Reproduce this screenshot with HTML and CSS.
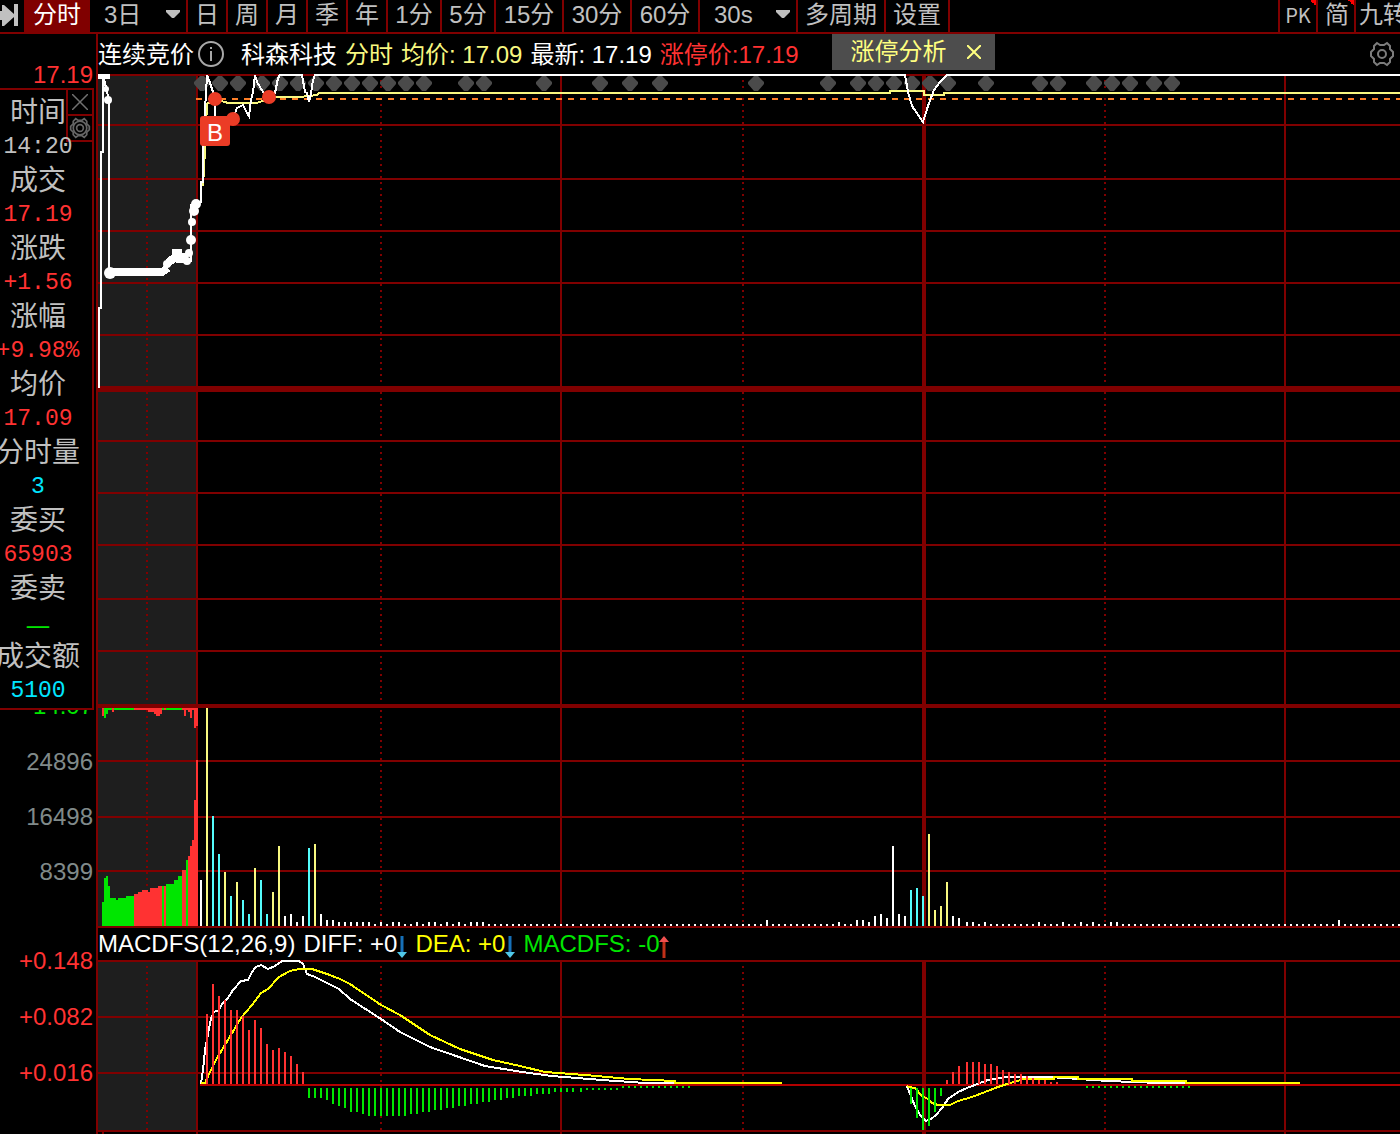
FILE: index.html
```html
<!DOCTYPE html>
<html lang="zh-CN">
<head>
<meta charset="utf-8">
<title>科森科技 分时</title>
<link rel="stylesheet" href="styles.css">
</head>
<body>
<header class="toolbar">
  <button class="tool tool-jump" type="button" aria-label="跳转">
    <svg width="18" height="28" viewBox="0 0 18 28"><path d="M0 9h2V3h2l10 9v3L4 24H2v-6H0zM14 2h4v22h-4z" fill="#c0c0c0"/></svg>
  </button>
  <button class="tool tool-active" type="button">分时</button>
  <label class="picker">
    <select aria-label="天数"><option>3日</option><option>5日</option></select>
    <svg class="caret" width="14" height="8" viewBox="0 0 14 8"><path d="M0 0h14v2L8 8H6L0 2z" fill="#c0c0c0"/></svg>
  </label>
  <button class="tool tool-s" type="button">日</button>
  <button class="tool tool-s" type="button">周</button>
  <button class="tool tool-s" type="button">月</button>
  <button class="tool tool-s" type="button">季</button>
  <button class="tool tool-s" type="button">年</button>
  <button class="tool tool-m" type="button">1分</button>
  <button class="tool tool-m" type="button">5分</button>
  <button class="tool tool-l" type="button">15分</button>
  <button class="tool tool-l" type="button">30分</button>
  <button class="tool tool-l" type="button">60分</button>
  <label class="picker">
    <select aria-label="秒周期"><option>30s</option><option>15s</option></select>
    <svg class="caret" width="14" height="8" viewBox="0 0 14 8"><path d="M0 0h14v2L8 8H6L0 2z" fill="#c0c0c0"/></svg>
  </label>
  <button class="tool" type="button">多周期</button>
  <button class="tool" type="button">设置</button>
  <div class="toolbar-end">
    <button class="tool tool-flag tool-pk" type="button">PK</button>
    <button class="tool tool-flag" type="button">简</button>
    <button class="tool tool-cut" type="button">九转</button>
  </div>
</header>

<main class="workspace">
  <div class="axis axis-price"><span class="up">17.19</span><span class="down">14.07</span></div>
  <div class="infobar">
    <span class="state">连续竞价
      <svg width="28" height="28" viewBox="0 0 28 28" fill="none" stroke="#a8a8a8" stroke-width="2"><circle cx="14" cy="13" r="12"/><path d="M14 10v10M14 6v2"/></svg>
    </span>
    <span>科森科技</span>
    <span class="avg">分时</span>
    <span class="avg">均价: 17.09</span>
    <span>最新: 17.19</span>
    <span class="up">涨停价:17.19</span>
    <div class="tag">
      <a href="#limit">涨停分析</a>
      <button class="icon-button" type="button" aria-label="关闭涨停分析">
        <svg width="14" height="14" viewBox="0 0 14 14" stroke="#ffff80" stroke-width="2"><path d="M0 0l14 14M14 0L0 14"/></svg>
      </button>
    </div>
    <button class="icon-button settings" type="button" aria-label="图表设置">
      <svg width="24" height="26" viewBox="0 0 24 26" fill="none" stroke="#7c7c7c" stroke-width="2"><path d="M7 2l3 2h4l3-2 3 3v3l3 3v4l-3 3v3l-3 3-3-2h-4l-3 2-3-3v-3l-3-3v-4l3-3V5z"/><circle cx="12" cy="13" r="4"/></svg>
    </button>
  </div>

  <div class="plot plot-price">
    <svg viewBox="98 74 1302 634" preserveAspectRatio="none">
      <path class="shade" d="M98 76H196V708H98z"/>
      <path class="grid" d="M98 75H1400M98 125H1400M98 179H1400M98 231H1400M98 283H1400M98 335H1400M98 441H1400M98 493H1400M98 545H1400M98 599H1400M98 651H1400M197 76V708M561 76V708M1285 76V708"/>
      <path class="grid grid-dots" d="M147 80V708M381 80V708M743 80V708M1105 80V708"/>
      <path class="grid grid-mid" d="M924 76V708M98 706H1400"/>
      <path class="grid grid-zero" d="M98 389H1400"/>
      <path class="diamonds" id="signals"/>
      <path class="prev" d="M196 99H1400"/>
      <path class="line avg-line" d="M203 186L205 150L207 104L215 99L228 103H257L262 101L276 97H300L317 95L319 93H890V91H924V95H944V93H1400"/>
      <path class="line" d="M99 388V308H101V152H103V75L109 100V272M191 262V204M197 202H201V182H203V146L207 75L209 80L213 92L215 99V116M233 118L237 108L243 105L247 113L249 116L251 100L253 92L255 75L257 82L263 92L269 97L275 93L278 78L280 75H302L305 92L307 93L309 102L311 94L313 80L315 75H905L908 92L912 106L923 122L928 106L934 90L940 82L947 75H1400"/>
      <path class="beads" d="M98 75H110M108 272H162L168 268M168 263L175 257H188M172 253H182M176 259H184"/>
      <g class="knots"><circle cx="106" cy="89" r="3"/><circle cx="108" cy="100" r="4"/><circle cx="110" cy="273" r="6"/><circle cx="167" cy="264" r="4"/><circle cx="178" cy="253" r="4"/><circle cx="187" cy="261" r="4"/><circle cx="189" cy="253" r="4"/><circle cx="191" cy="240" r="5"/><circle cx="192" cy="222" r="4"/><circle cx="194" cy="211" r="5"/><circle cx="196" cy="204" r="5"/></g>
      <g class="marks"><circle cx="215" cy="99" r="7"/><circle cx="269" cy="97" r="7"/><circle cx="233" cy="119" r="7"/></g>
    </svg>
    <span class="badge">B</span>
  </div>

  <div class="axis axis-volume"><span>24896</span><span>16498</span><span>8399</span></div>
  <div class="plot plot-volume">
    <svg viewBox="98 708 1302 220" preserveAspectRatio="none">
      <path class="shade" d="M98 708H196V926H98z"/>
      <path class="grid" d="M98 761H1400M98 817H1400M98 871H1400M98 927H1400M197 708V926M561 708V926M1285 708V926"/>
      <path class="grid grid-dots" d="M147 710V926M381 710V926M743 710V926M1105 710V926"/>
      <path class="grid grid-mid" d="M924 708V926"/>
      <g id="auction"></g>
      <g id="volume"></g>
    </svg>
  </div>

  <div class="axis axis-macd"><span>+0.148</span><span>+0.082</span><span>+0.016</span></div>
  <div class="macd">
    <div class="legend">
      <span>MACDFS(12,26,9)</span>
      <span class="reading">DIFF: +0<svg width="10" height="24" viewBox="0 0 10 24"><path d="M5 2v19" stroke="#1670b8" stroke-width="3"/><path d="M0 18h10L5 24z" fill="#50c8e8"/></svg></span>
      <span class="reading dea">DEA: +0<svg width="10" height="24" viewBox="0 0 10 24"><path d="M5 2v19" stroke="#1670b8" stroke-width="3"/><path d="M0 18h10L5 24z" fill="#50c8e8"/></svg></span>
      <span class="reading hist">MACDFS: -0<svg width="10" height="24" viewBox="0 0 10 24"><path d="M5 4v20" stroke="#c03018" stroke-width="3"/><path d="M0 8h10L5 2z" fill="#f05050"/></svg></span>
    </div>
    <div class="plot plot-macd">
      <svg viewBox="98 960 1302 174" preserveAspectRatio="none">
        <path class="shade" d="M98 962H196V1130H98z"/>
        <path class="grid" d="M98 961H1400M98 1017H1400M98 1073H1400M98 1131H1400M103 1132V1134M197 962V1134M561 962V1134M1285 962V1134"/>
        <path class="grid grid-dots" d="M147 966V1130M381 966V1130M743 966V1130M1105 966V1130"/>
        <path class="grid grid-mid" d="M924 962V1134"/>
        <path class="grid grid-base" d="M200 1085H1400"/>
        <path class="line" d="M201 1084L203 1070L205 1050L208 1034L211 1018L214 1012L219 1010L222 1004L228 998L233 990L241 981L248 980L252 972L256 967L261 965L268 969L275 966L282 961H299L303 964L307 974L315 977L327 983L339 989L350 999L381 1019L400 1032L430 1047L456 1056L485 1066L522 1072L552 1076L602 1080L645 1083H782M907 1086L910 1094L915 1106L920 1115L926 1121L931 1119L936 1115L942 1108L948 1099L958 1092L967 1088L980 1083L988 1080L1000 1078L1005 1077H1050L1108 1081L1160 1083H1300"/>
        <path class="line dea-line" d="M201 1083H205L210 1072L217 1058L228 1040L241 1018L252 1005L261 993L268 989L279 977L290 971L299 969H312L327 974L340 979L350 984L381 1005L400 1015L430 1035L460 1049L493 1060L520 1066L545 1072L585 1075L630 1079L675 1081V1083H782M907 1086L909 1087L915 1088L922 1096L928 1099L932 1103L938 1105H950L958 1101L972 1097L985 1092L998 1087L1010 1083L1024 1079H1054V1077H1078V1079H1132V1081H1186V1083H1300"/>
        <path class="bars bars-up" id="macd-up"/>
        <path class="bars bars-down" id="macd-down"/>
      </svg>
    </div>
  </div>

  <aside class="quote">
    <dl>
      <dt>时间</dt><dd class="plain">14:20</dd>
      <dt>成交</dt><dd>17.19</dd>
      <dt>涨跌</dt><dd>+1.56</dd>
      <dt>涨幅</dt><dd>+9.98%</dd>
      <dt>均价</dt><dd>17.09</dd>
      <dt>分时量</dt><dd class="lots">3</dd>
      <dt>委买</dt><dd>65903</dd>
      <dt>委卖</dt><dd class="none">—</dd>
      <dt>成交额</dt><dd class="lots">5100</dd>
    </dl>
    <div class="quote-tools">
      <button class="icon-button" type="button" aria-label="关闭">
        <svg width="16" height="16" viewBox="0 0 16 16" stroke="#707070" stroke-width="1.500"><path d="M0 0l16 16M16 0L0 16"/></svg>
      </button>
      <button class="icon-button" type="button" aria-label="设置">
        <svg width="22" height="22" viewBox="0 0 24 26" fill="none" stroke="#666" stroke-width="2"><path d="M7 2l3 2h4l3-2 3 3v3l3 3v4l-3 3v3l-3 3-3-2h-4l-3 2-3-3v-3l-3-3v-4l3-3V5z"/><circle cx="12" cy="13" r="8"/><circle cx="12" cy="13" r="4"/></svg>
      </button>
    </div>
  </aside>
</main>
<script src="chart.js"></script>
</body>
</html>
```

FILE: styles.css
```css
* { box-sizing: border-box; }

body {
  margin: 0;
  background: #000;
  color: #fff;
  font: 24px/28px "Liberation Sans", "Noto Sans CJK SC", sans-serif;
  overflow-x: hidden;
}

button, select {
  margin: 0;
  padding: 0;
  border: 0;
  background: none;
  color: inherit;
  font: inherit;
}

svg { display: block; flex: none; }

a { color: inherit; text-decoration: none; }

.up { color: #ff3232; }
.down { color: #00e600; }
.avg { color: #f8f880; }

/* Period toolbar */
.toolbar {
  display: flex;
  height: 34px;
  border-bottom: 2px solid #800000;
  color: #c0c0c0;
  white-space: nowrap;
}

.tool {
  flex: none;
  padding: 0 7px 2px;
  border-right: 2px solid #800000;
}

.tool-jump { width: 24px; padding: 0; border: 0; }
.tool-active { width: 66px; border: 0; background: #800000; color: #fff; }
.tool-s { width: 40px; }
.tool-m { width: 54px; }
.tool-l { width: 68px; }

.picker {
  position: relative;
  flex: none;
  width: 98px;
  border-right: 2px solid #800000;
}

.picker select {
  width: 100%;
  height: 100%;
  padding: 0 0 2px 14px;
  appearance: none;
}

.caret {
  position: absolute;
  right: 6px;
  top: 10px;
  pointer-events: none;
}

.toolbar-end {
  display: flex;
  margin-left: auto;
  border-left: 2px solid #800000;
}

.tool-flag {
  width: 38px;
  background: linear-gradient(45deg, transparent 50%, #f00 50%) right top / 6px 6px no-repeat;
}

.tool-pk { padding: 0 4px 2px; font: 20px/28px "Noto Sans CJK SC", sans-serif; }
.tool-cut { width: 44px; padding: 0 0 2px 3px; border: 0; overflow: hidden; text-align: left; }

/* Workspace: value axis on the left, panes on the right */
.workspace {
  position: relative;
  display: grid;
  grid-template-columns: 98px minmax(0, 1fr);
}

.axis {
  display: flex;
  flex-direction: column;
  padding-right: 3px;
  border-right: 2px solid #800000;
  color: #808a8a;
  text-align: right;
}

.axis-price { grid-row: span 2; justify-content: space-between; padding-top: 27px; }
.axis-price .down { margin-bottom: -12px; }
.axis-volume { padding-top: 26px; line-height: 55px; }
.axis-macd { padding-top: 5px; line-height: 56px; color: #ff3232; }

.infobar {
  display: flex;
  gap: 8px;
  height: 40px;
  padding-top: 7px;
  white-space: nowrap;
}

.state { display: flex; gap: 3px; margin-right: 8px; }

.tag {
  display: flex;
  align-items: center;
  gap: 20px;
  height: 36px;
  margin: -7px 0 0 25px;
  padding: 0 14px 0 19px;
  background: #4d4d4d;
  color: #ffff80;
}

.icon-button { display: grid; place-items: center; }
.settings { align-self: flex-start; margin: 0 6px 0 auto; }

.plot { position: relative; }
.plot svg { width: 100%; height: 100%; shape-rendering: crispEdges; }
.plot-price { height: 634px; }
.plot-volume { height: 220px; }
.plot-macd { height: 174px; }

.shade { fill: #1e1e1e; }
.grid { fill: none; stroke: #800000; stroke-width: 2; }
.grid-dots { stroke-dasharray: 2 4; }
.grid-mid { stroke-width: 4; }
.grid-zero { stroke-width: 6; }
.grid-base { stroke: #b40000; }
.prev { fill: none; stroke: #ff7f27; stroke-width: 2; stroke-dasharray: 6 6; }
.line { fill: none; stroke: #fff; stroke-width: 2; }
.avg-line { stroke: #f8f880; }
.dea-line { stroke: #ff0; }
.beads { fill: none; stroke: #fff; stroke-width: 8; stroke-linejoin: round; }
.knots { fill: #fff; shape-rendering: auto; }
.diamonds { fill: #4a4a4a; shape-rendering: auto; }
.marks { fill: #eb3c26; shape-rendering: auto; }

.bars { fill: none; stroke: #fff; stroke-width: 2; }
.bars-up { stroke: #ff3232; }
.bars-down { stroke: #00e600; }
.bars-buy { stroke: #f8f880; }
.bars-sell { stroke: #54fcfc; }

.badge {
  position: absolute;
  left: 102px;
  top: 42px;
  width: 30px;
  height: 30px;
  border-radius: 3px;
  background: #eb3c26;
  line-height: 34px;
  text-align: center;
}

.legend {
  display: flex;
  gap: 8px;
  height: 32px;
  padding-top: 2px;
  white-space: nowrap;
}

.reading { display: flex; height: 28px; }
.dea { color: #ff0; }
.hist { color: #00e600; }
.reading svg { margin-top: 4px; }

/* Floating quote window */
.quote {
  position: absolute;
  left: 0;
  top: 54px;
  width: 94px;
  border: solid #800000;
  border-width: 2px 2px 2px 0;
  background: #000;
  overflow: hidden;
}

.quote dl {
  position: relative;
  z-index: 1;
  margin: 0;
  padding: 6px 16px 0 0;
  pointer-events: none;
}

.quote dt, .quote dd {
  display: flex;
  justify-content: center;
  margin: 0;
  line-height: 34px;
  white-space: nowrap;
}

.quote dt { color: #c0c0c0; font-size: 28px; }
.quote dd { color: #ff3232; font-family: "Liberation Mono", monospace; font-size: 23px; }
.quote .plain { color: #c0c0c0; }
.quote .lots { color: #00e5ff; }
.quote .none { color: #00e600; font: 28px/34px "Noto Sans CJK SC", sans-serif; }

.quote-tools {
  position: absolute;
  right: 0;
  top: 0;
  border-left: 2px solid #800000;
}

.quote-tools button {
  width: 24px;
  height: 26px;
  border-bottom: 2px solid #800000;
}
```

FILE: chart.js
```js
const SVG_NS = "http://www.w3.org/2000/svg";

// Builds a path of vertical strokes from [x, top] pairs down to a base line.
const strokes = (pairs, base) => pairs.map(([x, y]) => `M${x} ${y}V${base}`).join("");

function addPath(parent, className, d) {
  const path = document.createElementNS(SVG_NS, "path");
  path.setAttribute("class", className);
  path.setAttribute("d", d);
  parent.append(path);
}

// Signal markers along the top of the price pane
const signals = [202, 220, 238, 262, 280, 298, 316, 334, 352, 370, 388, 406, 424, 466, 484,
  544, 600, 630, 660, 756, 828, 858, 876, 894, 912, 930, 948, 986, 1040, 1058, 1094, 1112,
  1130, 1154, 1172];
document.getElementById("signals").setAttribute("d",
  signals.map(x => `M${x - 2} 76h4l6 6v2l-6 7h-4l-6-7v-2z`).join(""));

// Opening auction: [left, right, top, rising]
const matched = [[102, 104, 902], [104, 106, 878], [106, 108, 876], [108, 110, 886],
  [110, 116, 898], [116, 118, 900], [118, 126, 898], [126, 134, 896], [134, 138, 894, 1],
  [138, 142, 892, 1], [142, 148, 890, 1], [148, 150, 892, 1], [150, 158, 888, 1],
  [158, 162, 886, 1], [162, 164, 886], [164, 166, 886, 1], [166, 174, 884], [174, 178, 880],
  [178, 182, 876], [182, 186, 870, 1], [186, 188, 860], [188, 190, 856, 1],
  [190, 192, 846, 1], [192, 194, 840, 1], [194, 196, 800, 1], [196, 198, 760, 1]];
// Unmatched orders hang from the top: [left, right, bottom, rising]
const unmatched = [[102, 134, 710], [134, 162, 710, 1], [162, 164, 710], [164, 166, 710, 1],
  [166, 182, 710], [182, 198, 710, 1], [102, 104, 716, 1], [104, 106, 718], [106, 108, 714],
  [112, 114, 712, 1], [148, 154, 712, 1], [154, 156, 714, 1], [156, 160, 716, 1],
  [160, 162, 714, 1], [184, 186, 716, 1], [188, 190, 712, 1], [190, 192, 718, 1],
  [194, 196, 728, 1], [196, 198, 726, 1]];

function addBlocks(parent, blocks, base) {
  for (const [left, right, edge, rising] of blocks) {
    const rect = document.createElementNS(SVG_NS, "rect");
    rect.setAttribute("x", left);
    rect.setAttribute("y", Math.min(edge, base));
    rect.setAttribute("width", right - left);
    rect.setAttribute("height", Math.abs(base - edge));
    rect.setAttribute("fill", rising ? "#ff3232" : "#00e600");
    parent.append(rect);
  }
}
const auction = document.getElementById("auction");
addBlocks(auction, matched, 926);
addBlocks(auction, unmatched, 708);

// Traded volume
const buy = [[207, 706], [225, 872], [237, 882], [255, 868], [273, 892], [279, 846],
  [315, 844], [929, 834], [935, 910], [941, 906], [947, 882]];
const sell = [[213, 816], [219, 854], [231, 896], [243, 900], [249, 914], [261, 880],
  [267, 914], [309, 848], [911, 890], [917, 888], [923, 896]];
const flat = new Map([[201, 880], [285, 916], [291, 914], [297, 922], [303, 916], [321, 914],
  [327, 920], [333, 920], [767, 920], [857, 920], [863, 920], [875, 916], [881, 914],
  [887, 918], [893, 846], [899, 914], [905, 916], [953, 916], [959, 918], [1339, 920]]);
for (const x of [339, 345, 351, 357, 363, 369, 381, 393, 399, 417, 429, 435, 447, 459, 471,
  477, 483, 839, 869, 967, 973, 985, 1039, 1063, 1081, 1093, 1111, 1117]) flat.set(x, 922);
const quiet = (from, to) => {
  for (let x = from; x <= to; x += 6) if (!flat.has(x)) flat.set(x, 924);
};
quiet(339, 573);
quiet(581, 905);
quiet(967, 1400);

const volume = document.getElementById("volume");
addPath(volume, "bars", strokes([...flat], 926));
addPath(volume, "bars bars-buy", strokes(buy, 926));
addPath(volume, "bars bars-sell", strokes(sell, 926));

// MACD histogram
const spread = (from, values) => values.map((y, i) => [from + i * 6, y]);
const rising = [
  ...spread(207, [1014, 984, 996, 1000, 1010, 1010, 1016, 1030, 1020, 1028, 1044, 1050,
    1048, 1052, 1056, 1064, 1072]),
  ...spread(947, [1080, 1072, 1066]),
  ...spread(967, [1062, 1062, 1062, 1064, 1064, 1066, 1070, 1072, 1074, 1074, 1076, 1078,
    1080, 1080, 1082, 1082])];
const falling = [
  ...spread(309, [1098, 1098, 1098, 1100, 1104, 1106, 1108, 1112, 1112, 1114, 1116, 1116,
    1116, 1116, 1116, 1116, 1116, 1114, 1114, 1112, 1112, 1110, 1110, 1108, 1108, 1106,
    1106, 1104, 1104, 1102, 1102, 1100, 1100, 1098, 1098, 1096, 1096, 1096, 1094, 1094,
    1094, 1092, 1092, 1092, 1092]),
  ...spread(581, [1092, 1090, 1090, 1090, 1090, 1090, 1090]),
  ...spread(911, [1104, 1118, 1130, 1126, 1112, 1096])];
let specks = "";
for (let x = 623; x <= 689; x += 6) specks += `M${x} 1086V1088`;
for (let x = 1087; x <= 1190; x += 6) specks += `M${x} 1086V1088`;
document.getElementById("macd-up").setAttribute("d", strokes(rising, 1084));
document.getElementById("macd-down").setAttribute("d", strokes(falling, 1088) + specks);
```
